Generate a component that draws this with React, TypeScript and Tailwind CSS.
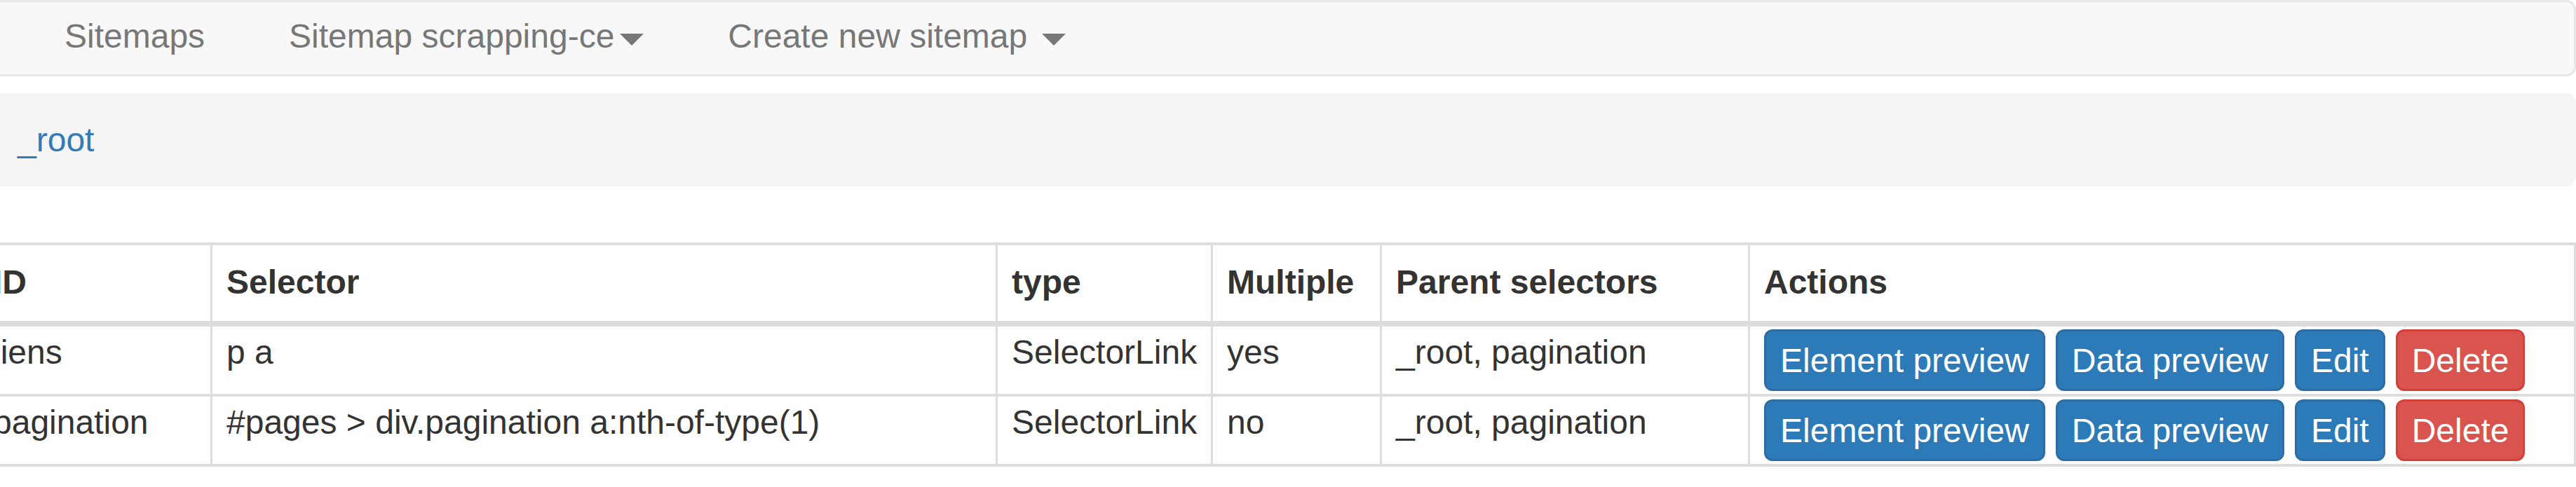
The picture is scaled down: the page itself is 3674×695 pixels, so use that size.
import React from "react";

const Caret = ({ className = "" }: { className?: string }) => (
    <span className={`inline-block w-0 h-0 border-t-[17px] border-t-[#777] border-x-[17px] border-x-transparent ${className}`}></span>
);

const rows = [
    { id: "liens", selector: "p a", type: "SelectorLink", multiple: "yes", parents: "_root, pagination" },
    { id: "pagination", selector: "#pages > div.pagination a:nth-of-type(1)", type: "SelectorLink", multiple: "no", parents: "_root, pagination" },
];

const headers = ["ID", "Selector", "type", "Multiple", "Parent selectors", "Actions"];

export default function App() {
    return (
        <div className="w-[3674px] h-[695px] overflow-hidden bg-white font-['Liberation_Sans',Arial,sans-serif] text-[48px] leading-[65px] text-[#333]">
            {/* navbar, left part runs off the page */}
            <nav className="ml-[-40px] w-[3714px] h-[109px] bg-[#f8f8f8] border-[3px] border-[#e7e7e7] rounded-[14px] pl-[69px] pt-[16px]">
                <ul className="flex text-[#777]">
                    <li className="px-[60px]">Sitemaps</li>
                    <li className="px-[60px] flex items-start">
                        <span>Sitemap scrapping-ce</span>
                        <Caret className="ml-[8px] mt-[29px]" />
                    </li>
                    <li className="px-[60px] flex items-start">
                        <span>Create new sitemap</span>
                        <Caret className="ml-[21px] mt-[29px]" />
                    </li>
                </ul>
            </nav>

            <div className="ml-[-40px] mt-[24px] w-[3714px] bg-[#f5f5f5] rounded-[14px] pl-[65px] py-[34px]">
                <a className="text-[#337ab7]">_root</a>
            </div>

            <table className="ml-[-33px] mt-[80px] w-[3707px] table-fixed border-separate border-spacing-0">
                <colgroup>
                    <col className="w-[333px]" />
                    <col className="w-[1120px]" />
                    <col className="w-[307px]" />
                    <col className="w-[241px]" />
                    <col className="w-[525px]" />
                    <col className="w-[1181px]" />
                </colgroup>
                <thead>
                    <tr>
                        {headers.map((h, i) => (
                            <th
                                key={h}
                                className={`text-left align-top font-bold pl-[20px] pt-[20px] pb-[23px] border-[#ddd] border-t-[4px] border-l-[3px] border-b-[8px] whitespace-nowrap ${i === headers.length - 1 ? "border-r-[3px]" : ""}`}
                            >
                                {h}
                            </th>
                        ))}
                    </tr>
                </thead>
                <tbody>
                    {rows.map((r) => (
                        <tr key={r.id}>
                            {[r.id, r.selector, r.type, r.multiple, r.parents].map((v, i) => (
                                <td key={i} className="align-top pl-[20px] py-[4px] border-[#ddd] border-l-[3px] border-b-[4px] whitespace-nowrap">
                                    {v}
                                </td>
                            ))}
                            <td className="align-top pl-[20px] py-[4px] border-[#ddd] border-l-[3px] border-r-[3px] border-b-[4px]">
                                <div className="flex gap-[15px]">
                                    <button className="h-[88px] px-[20px] border-[3px] border-[#2e6da4] bg-[#2c7ab7] text-white rounded-[12px]">Element preview</button>
                                    <button className="h-[88px] px-[20px] border-[3px] border-[#2e6da4] bg-[#2c7ab7] text-white rounded-[12px]">Data preview</button>
                                    <button className="h-[88px] px-[20px] border-[3px] border-[#2e6da4] bg-[#2c7ab7] text-white rounded-[12px]">Edit</button>
                                    <button className="h-[88px] px-[20px] border-[3px] border-[#d43f3a] bg-[#d9534f] text-white rounded-[12px]">Delete</button>
                                </div>
                            </td>
                        </tr>
                    ))}
                </tbody>
            </table>
        </div>
    );
}
